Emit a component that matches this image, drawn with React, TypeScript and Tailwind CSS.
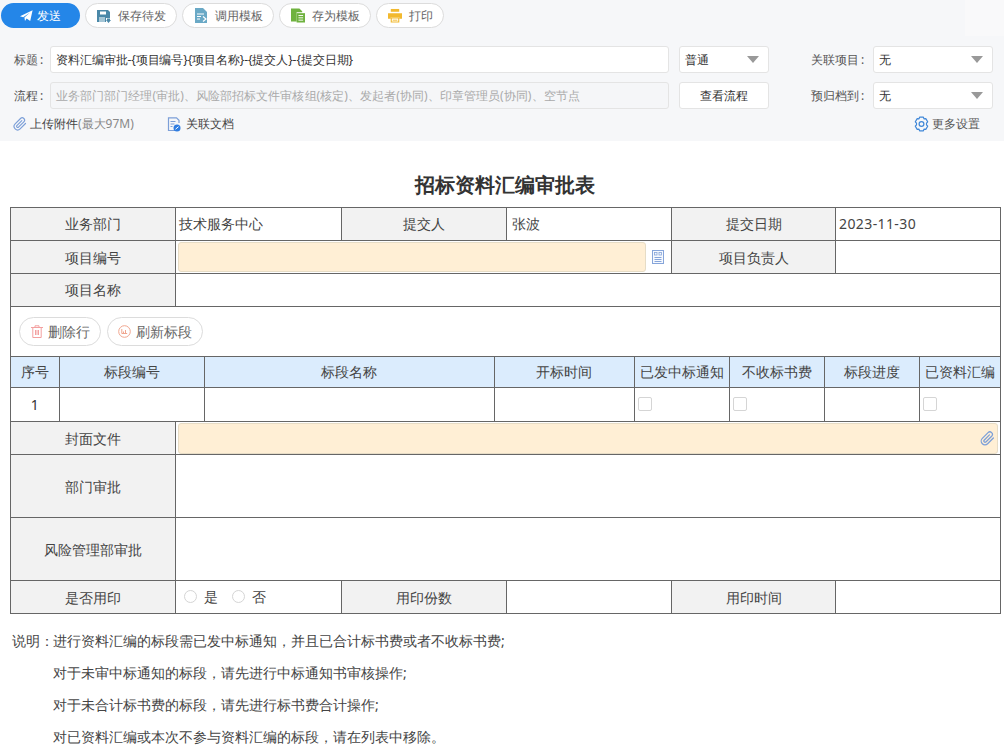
import React from "react";

const FONT = "font-['Noto_Sans_CJK_SC','Noto_Sans',sans-serif]";

function Pill({ icon, label, w }: { icon: React.ReactNode; label: string; w: string }) {
  return (
    <button className={`flex h-[25px] ${w} items-center rounded-full border border-[#dcdcdc] bg-white pl-[11px] text-[12px] text-[#666]`}>
      <span className="mr-[7px] flex h-[14px] w-[14px] shrink-0 items-center justify-center">{icon}</span>
      {label}
    </button>
  );
}

const SendIcon = () => (
  <svg width="13" height="12" viewBox="0 0 13 12"><path d="M0 6.2 12.6.2 10.2 11 6.6 8.4 5 11 4.4 7.6 10 2.4 3.2 7.2Z" fill="#fff" /></svg>
);
const SaveIcon = () => (
  <svg width="14" height="14" viewBox="0 0 14 14">
    <path d="M0 1h11l2 2v6H9v4H0Z" fill="#4a88a8" />
    <rect x="3" y="2.500" width="6" height="3" fill="#fff" />
    <rect x="2" y="8" width="6" height="5" fill="#a5c6d6" />
    <path d="M10 9.500h3V11h1l-2.500 3L9 11h1Z" fill="#4a88a8" />
  </svg>
);
const LoadIcon = () => (
  <svg width="14" height="15" viewBox="0 0 14 15">
    <path d="M1 0h8l4 4v11H1Z" fill="#6aa9c6" />
    <path d="M3 6h7M3 8.500h4M3 11h3" stroke="#fff" strokeWidth="1" />
    <path d="M9 8.500l3 2.500-3 2.500" stroke="#fff" strokeWidth="1.200" fill="none" />
  </svg>
);
const StoreIcon = () => (
  <svg width="15" height="15" viewBox="0 0 15 15">
    <path d="M0 0h9l3 3v1H6v10H0Z" fill="#6fb23f" />
    <rect x="6" y="5" width="9" height="10" fill="#6fb23f" />
    <path d="M8 7.500h5M8 10h5M8 12.500h5" stroke="#fff" strokeWidth="1" />
  </svg>
);
const PrintIcon = () => (
  <svg width="15" height="15" viewBox="0 0 15 15">
    <rect x="3" y="0.500" width="9" height="3" fill="#f2b92f" />
    <path d="M0 5h15v6h-3V9H3v2H0Z" fill="#f2b92f" />
    <path d="M3.500 10h8v4.500h-8Z" fill="#fff" stroke="#f2b92f" strokeWidth="1.200" />
    <rect x="5" y="12" width="5" height="1" fill="#f2b92f" />
  </svg>
);
const Clip = ({ size = 14 }: { size?: number }) => (
  <svg width={size} height={size} viewBox="0 0 24 24" fill="none" stroke="#7c9fd8" strokeWidth="2" strokeLinecap="round" strokeLinejoin="round">
    <path d="M21.400 11.100 12.200 20.300a6 6 0 0 1-8.500-8.500l9.200-9.200a4 4 0 0 1 5.700 5.700l-9.200 9.200a2 2 0 0 1-2.800-2.800l8.500-8.500" />
  </svg>
);
const DocIcon = () => (
  <svg width="14" height="15" viewBox="0 0 14 15" fill="none">
    <path d="M9 13.500H1.500V.8h8L12 3.300V6" stroke="#7c9fd8" strokeWidth="1.200" />
    <path d="M3.500 4.500h5M3.500 7h4M3.500 9.500h2" stroke="#7c9fd8" strokeWidth="1" />
    <circle cx="10" cy="11" r="3.500" fill="#2f7de1" />
    <path d="M8.500 12.200l3-2.500" stroke="#fff" strokeWidth="1" />
  </svg>
);
const Gear = () => (
  <svg width="15" height="16" viewBox="0 0 15 16" fill="none" stroke="#3f87d8" strokeWidth="1.200" strokeLinejoin="round">
    <path d="M5.600 1.200h3.800l.6 1.700 1.800-.3 1.900 3.200-1.200 1.400 0 1.600 1.200 1.400-1.900 3.200-1.800-.3-.6 1.700H5.600l-.6-1.700-1.800.3L1.300 10.200l1.200-1.400 0-1.600L1.300 5.800l1.900-3.200 1.800.3Z" />
    <circle cx="7.500" cy="8" r="2.400" />
  </svg>
);
const Trash = () => (
  <svg width="12" height="13" viewBox="0 0 12 13" fill="none" stroke="#f3a0a0" strokeWidth="1">
    <path d="M0 2.500h12M4 2.500V.8h4v1.700M1.800 2.500v10h8.400v-10M4.500 5v5M6 5v5M7.500 5v5" />
  </svg>
);
const Refresh = () => (
  <svg width="13" height="13" viewBox="0 0 13 13" fill="none" stroke="#f0a58e" strokeWidth="1">
    <circle cx="6.500" cy="6.500" r="5.800" />
    <path d="M3.800 4v4.500h5.400M5.500 6.500v1.500M7.500 5v3" />
  </svg>
);
const Lookup = () => (
  <svg width="12" height="14" viewBox="0 0 12 14" fill="none">
    <rect x="0.500" y="0.500" width="11" height="13" fill="#f6f9fe" stroke="#86a5da" />
    <rect x="2.500" y="2.500" width="2.500" height="2.500" stroke="#86a5da" strokeWidth="0.800" />
    <rect x="7" y="2.500" width="2.500" height="2.500" stroke="#86a5da" strokeWidth="0.800" />
    <path d="M2.500 7.500h7M2.500 9.500h7M2.500 11.500h7" stroke="#86a5da" />
  </svg>
);

function Select({ label, w }: { label: string; w: string }) {
  return (
    <div className={`flex h-[27px] ${w} items-center justify-between rounded-[3px] border border-[#e4e4e4] bg-white pl-[5px] pr-[9px] text-[12px] text-[#333]`}>
      {label}
      <span className="h-0 w-0 border-x-[6px] border-t-[7px] border-x-transparent border-t-[#999]" />
    </div>
  );
}

const label = "border border-[#666] bg-[#f2f2f2] text-center align-middle font-normal text-[#444]";
const lift = "pb-[2px]";
const cell = "border border-[#666] bg-white px-[3px] text-left align-middle font-normal text-[#444]";
const head = "border border-[#666] bg-[#dbecfd] text-center font-normal text-[#444] whitespace-nowrap";
const sub = "border border-[#666] bg-white align-middle";
const Check = () => <span className="ml-[3px] block h-[14px] w-[14px] rounded-[2px] border border-[#d5d5d5] bg-white" />;
const Radio = ({ text }: { text: string }) => (
  <span className="flex items-center">
    <span className="mr-[7px] block h-[13px] w-[13px] rounded-full border border-[#d5d5d5] bg-white" />
    {text}
  </span>
);

export default function App() {
  return (
    <div className={`${FONT} h-[749px] w-[1004px] overflow-hidden bg-white`}>
      <header className="relative h-[141px] bg-[#f6f7f9]">
        <div className="absolute right-0 top-0 h-[36px] w-[39px] bg-[#f9f9fa]" />
        <div className="flex h-[36px] items-start gap-[5px] pl-px pt-[3px]">
          <button className="flex h-[25px] w-[79px] items-center rounded-full bg-[#2486e8] pl-[19px] text-[12px] text-white">
            <span className="mr-[4px] flex"><SendIcon /></span>发送
          </button>
          <Pill w="w-[92px]" icon={<SaveIcon />} label="保存待发" />
          <Pill w="w-[92px]" icon={<LoadIcon />} label="调用模板" />
          <Pill w="w-[92px]" icon={<StoreIcon />} label="存为模板" />
          <Pill w="w-[68px]" icon={<PrintIcon />} label="打印" />
        </div>
        <div className="mt-[10px] flex h-[27px] items-center pl-[14px] text-[12px] text-[#555]">
          <span className="w-[36px]">标题<span className="ml-[2px]">:</span></span>
          <div className="flex h-[27px] w-[619px] items-center rounded-[3px] border border-[#e4e4e4] bg-white pl-[5px] tracking-[-0.1px] text-[#333]">资料汇编审批-{"{项目编号}{项目名称}"}-{"{提交人}"}-{"{提交日期}"}</div>
          <div className="ml-[10px]"><Select w="w-[90px]" label="普通" /></div>
          <span className="ml-[42px] w-[62px]">关联项目<span className="ml-[2px]">:</span></span>
          <Select w="w-[120px]" label="无" />
        </div>
        <div className="mt-[9px] flex h-[27px] items-center pl-[14px] text-[12px] text-[#555]">
          <span className="w-[36px]">流程<span className="ml-[2px]">:</span></span>
          <div className="flex h-[27px] w-[619px] items-center rounded-[3px] border border-[#e4e4e4] bg-[#f5f6f8] pl-[5px] tracking-[0.06px] text-[#aaa]">业务部门部门经理(审批)、风险部招标文件审核组(核定)、发起者(协同)、印章管理员(协同)、空节点</div>
          <div className="ml-[10px] flex h-[27px] w-[90px] items-center justify-center rounded-[3px] border border-[#e4e4e4] bg-white text-[#333]">查看流程</div>
          <span className="ml-[42px] w-[62px]">预归档到<span className="ml-[2px]">:</span></span>
          <Select w="w-[120px]" label="无" />
        </div>
        <div className="mt-[5px] flex h-[20px] items-center text-[12px] text-[#444]">
          <span className="ml-[13px] mr-[3px] flex"><Clip /></span>
          上传附件<span className="text-[#888]">(最大97M)</span>
          <span className="ml-[33px] mr-[5px] flex"><DocIcon /></span>关联文档
          <span className="ml-auto mr-[3px] flex"><Gear /></span>
          <span className="mr-[24px] text-[#555]">更多设置</span>
        </div>
      </header>

      <h1 className="mt-[29px] h-[37px] pl-[5px] text-center text-[20px] font-bold leading-[30px] text-[#333]">招标资料汇编审批表</h1>

      <table className="ml-[10px] w-[990px] table-fixed border-collapse text-[14px]">
        <colgroup>
          <col className="w-[165px]" /><col className="w-[166px]" /><col className="w-[165px]" />
          <col className="w-[165px]" /><col className="w-[164px]" /><col className="w-[165px]" />
        </colgroup>
        <tbody>
          <tr className="h-[33px]">
            <th className={`${label} ${lift}`}>业务部门</th><td className={`${cell} ${lift}`}>技术服务中心</td>
            <th className={`${label} ${lift}`}>提交人</th><td className={`${cell} ${lift} pl-[5px]`}>张波</td>
            <th className={`${label} ${lift}`}>提交日期</th><td className={`${cell} ${lift} tracking-[0.4px]`}>2023-11-30</td>
          </tr>
          <tr className="h-[33px]">
            <th className={label}>项目编号</th>
            <td colSpan={3} className={`${cell} !px-[2px]`}>
              <div className="flex items-center justify-between pr-[5px]">
                <div className="h-[30px] w-[468px] rounded-[3px] border border-[#e6dcc6] bg-[#ffefd5]" />
                <Lookup />
              </div>
            </td>
            <th className={label}>项目负责人</th><td className={cell} />
          </tr>
          <tr className="h-[33px]">
            <th className={`${label} ${lift}`}>项目名称</th><td colSpan={5} className={cell} />
          </tr>
          <tr className="h-[50px]">
            <td colSpan={6} className="border border-[#666] bg-white pl-[8px]">
              <div className="flex gap-[6px] pb-px">
                <button className="flex h-[29px] w-[82px] items-center justify-center gap-[5px] rounded-full border border-[#dcdcdc] text-[14px] text-[#666]"><Trash />删除行</button>
                <button className="flex h-[29px] w-[96px] items-center justify-center gap-[5px] rounded-full border border-[#dcdcdc] text-[14px] text-[#666]"><Refresh />刷新标段</button>
              </div>
            </td>
          </tr>
          <tr>
            <td colSpan={6} className="border border-[#666] p-0">
              <table className="w-[989px] table-fixed border-collapse text-[14px]">
                <colgroup>
                  <col className="w-[48px]" /><col className="w-[145px]" /><col className="w-[290px]" /><col className="w-[140px]" />
                  <col className="w-[95px]" /><col className="w-[95px]" /><col className="w-[95px]" /><col className="w-[81px]" />
                </colgroup>
                <tbody>
                  <tr className="h-[30px]">
                    {["序号", "标段编号", "标段名称", "开标时间", "已发中标通知", "不收标书费", "标段进度", "已资料汇编"].map((t, i) => (
                      <th key={t} className={`${head} border-t-0 ${i === 0 ? "border-l-0" : ""} ${i === 7 ? "border-r-0" : ""}`}>{t}</th>
                    ))}
                  </tr>
                  <tr className="h-[34px]">
                    <td className={`${sub} border-b-0 border-l-0 text-center text-[#333]`}>1</td>
                    <td className={`${sub} border-b-0`} /><td className={`${sub} border-b-0`} /><td className={`${sub} border-b-0`} />
                    <td className={`${sub} border-b-0`}><Check /></td>
                    <td className={`${sub} border-b-0`}><Check /></td>
                    <td className={`${sub} border-b-0`} />
                    <td className={`${sub} border-b-0 border-r-0`}><Check /></td>
                  </tr>
                </tbody>
              </table>
            </td>
          </tr>
          <tr className="h-[33px]">
            <th className={label}>封面文件</th>
            <td colSpan={5} className={`${cell} !px-[2px]`}>
              <div className="flex h-[31px] items-center justify-end rounded-[3px] border border-[#e6dcc6] bg-[#ffefd5] pr-[2px]"><Clip size={15} /></div>
            </td>
          </tr>
          <tr className="h-[63px]">
            <th className={label}>部门审批</th><td colSpan={5} className={cell} />
          </tr>
          <tr className="h-[63px]">
            <th className={label}>风险管理部审批</th><td colSpan={5} className={cell} />
          </tr>
          <tr className="h-[33px]">
            <th className={label}>是否用印</th>
            <td className={`${cell} !pl-[8px]`}>
              <div className="flex gap-[14px] pb-[2px]"><Radio text="是" /><Radio text="否" /></div>
            </td>
            <th className={label}>用印份数</th><td className={cell} />
            <th className={label}>用印时间</th><td className={cell} />
          </tr>
        </tbody>
      </table>

      <div className="mt-[17px] flex flex-col gap-[12px] pl-[12px] text-[14px] leading-[20px] text-[#444]">
        <p className="flex"><span className="w-[41px] shrink-0 whitespace-nowrap">说明：</span>进行资料汇编的标段需已发中标通知，并且已合计标书费或者不收标书费;</p>
        <p className="pl-[41px]">对于未审中标通知的标段，请先进行中标通知书审核操作;</p>
        <p className="pl-[41px]">对于未合计标书费的标段，请先进行标书费合计操作;</p>
        <p className="pl-[41px]">对已资料汇编或本次不参与资料汇编的标段，请在列表中移除。</p>
      </div>
    </div>
  );
}
